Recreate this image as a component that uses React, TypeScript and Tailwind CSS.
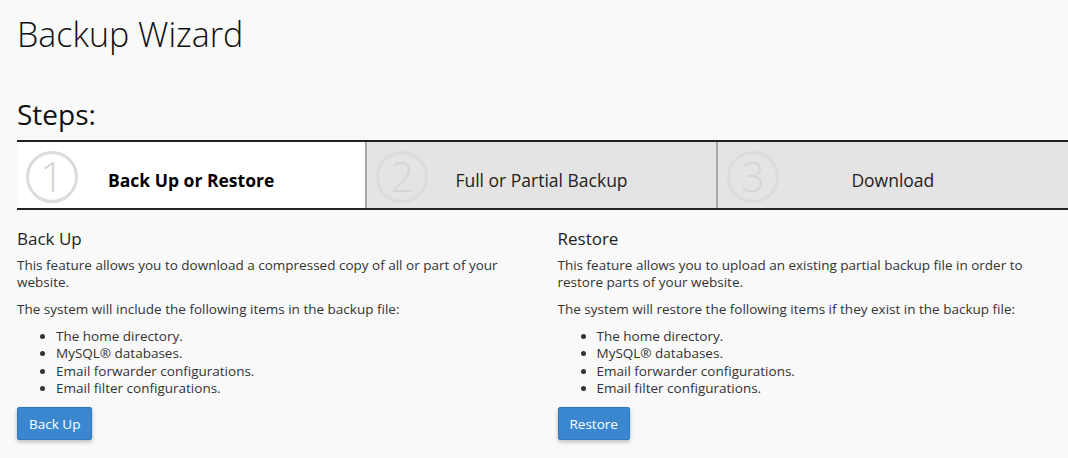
import React from "react";

const items = [
  "The home directory.",
  "MySQL® databases.",
  "Email forwarder configurations.",
  "Email filter configurations.",
];

function Circle({ n }: { n: number }) {
  return (
    <div className="absolute left-[9px] top-[9px] w-[52px] h-[52px] rounded-full border-[3px] border-[#dcdcdc] flex items-center justify-center">
      <span className="text-[42px] leading-none font-light text-[#d6d6d6] mt-[-2px]">{n}</span>
    </div>
  );
}

function Step({ n, label, active, last }: { n: number; label: string; active?: boolean; last?: boolean }) {
  return (
    <div
      className={`relative h-[66px] flex items-center justify-center ${active ? "bg-white" : "bg-[#e4e4e4]"} ${last ? "" : "border-r-2 border-[#a8a8a8]"}`}
    >
      <Circle n={n} />
      <span className={`text-[17.5px] pt-[10px] ${active ? "font-bold text-black" : "text-[#222]"}`}>{label}</span>
    </div>
  );
}

function Col({ title, intro, lead, btn }: { title: string; intro: string; lead: string; btn: string }) {
  return (
    <div>
      <h2 className="text-[17px] leading-[22px] text-[#222] mt-[18px]">{title}</h2>
      <p className="text-[13.5px] leading-[17px] text-[#333] mt-[7px]">{intro}</p>
      <p className="text-[13.5px] leading-[17px] text-[#333] mt-[10px]">{lead}</p>
      <ul className="list-disc pl-[39px] mt-[10px] text-[13.5px] leading-[17.3px] text-[#333]">
        {items.map((i) => (
          <li key={i}>{i}</li>
        ))}
      </ul>
      <button className="mt-[10px] h-[33px] px-[11px] rounded-[2px] bg-[#3a87d0] border border-[#2f78bd] text-white text-[13.5px] shadow-[0_2px_4px_rgba(0,0,0,0.25)]">
        {btn}
      </button>
    </div>
  );
}

export default function App() {
  return (
    <div className="min-h-[458px] bg-[#f9f9f9] pl-[17px] font-['Open_Sans',sans-serif] text-[#222] overflow-hidden">
      <h1 className="text-[34px] font-light leading-[44px] pt-[12px] text-[#111]">Backup Wizard</h1>
      <h2 className="text-[28px] font-normal leading-[36px] mt-[40px] text-[#111]">Steps:</h2>
      <div className="mt-[8px] w-[1051px] border-t-2 border-b-2 border-[#222] grid grid-cols-3">
        <Step n={1} label="Back Up or Restore" active />
        <Step n={2} label="Full or Partial Backup" />
        <Step n={3} label="Download" last />
      </div>
      <div className="w-[1051px] grid grid-cols-2 gap-x-[30px]">
        <Col
          title="Back Up"
          intro="This feature allows you to download a compressed copy of all or part of your website."
          lead="The system will include the following items in the backup file:"
          btn="Back Up"
        />
        <Col
          title="Restore"
          intro="This feature allows you to upload an existing partial backup file in order to restore parts of your website."
          lead="The system will restore the following items if they exist in the backup file:"
          btn="Restore"
        />
      </div>
    </div>
  );
}
